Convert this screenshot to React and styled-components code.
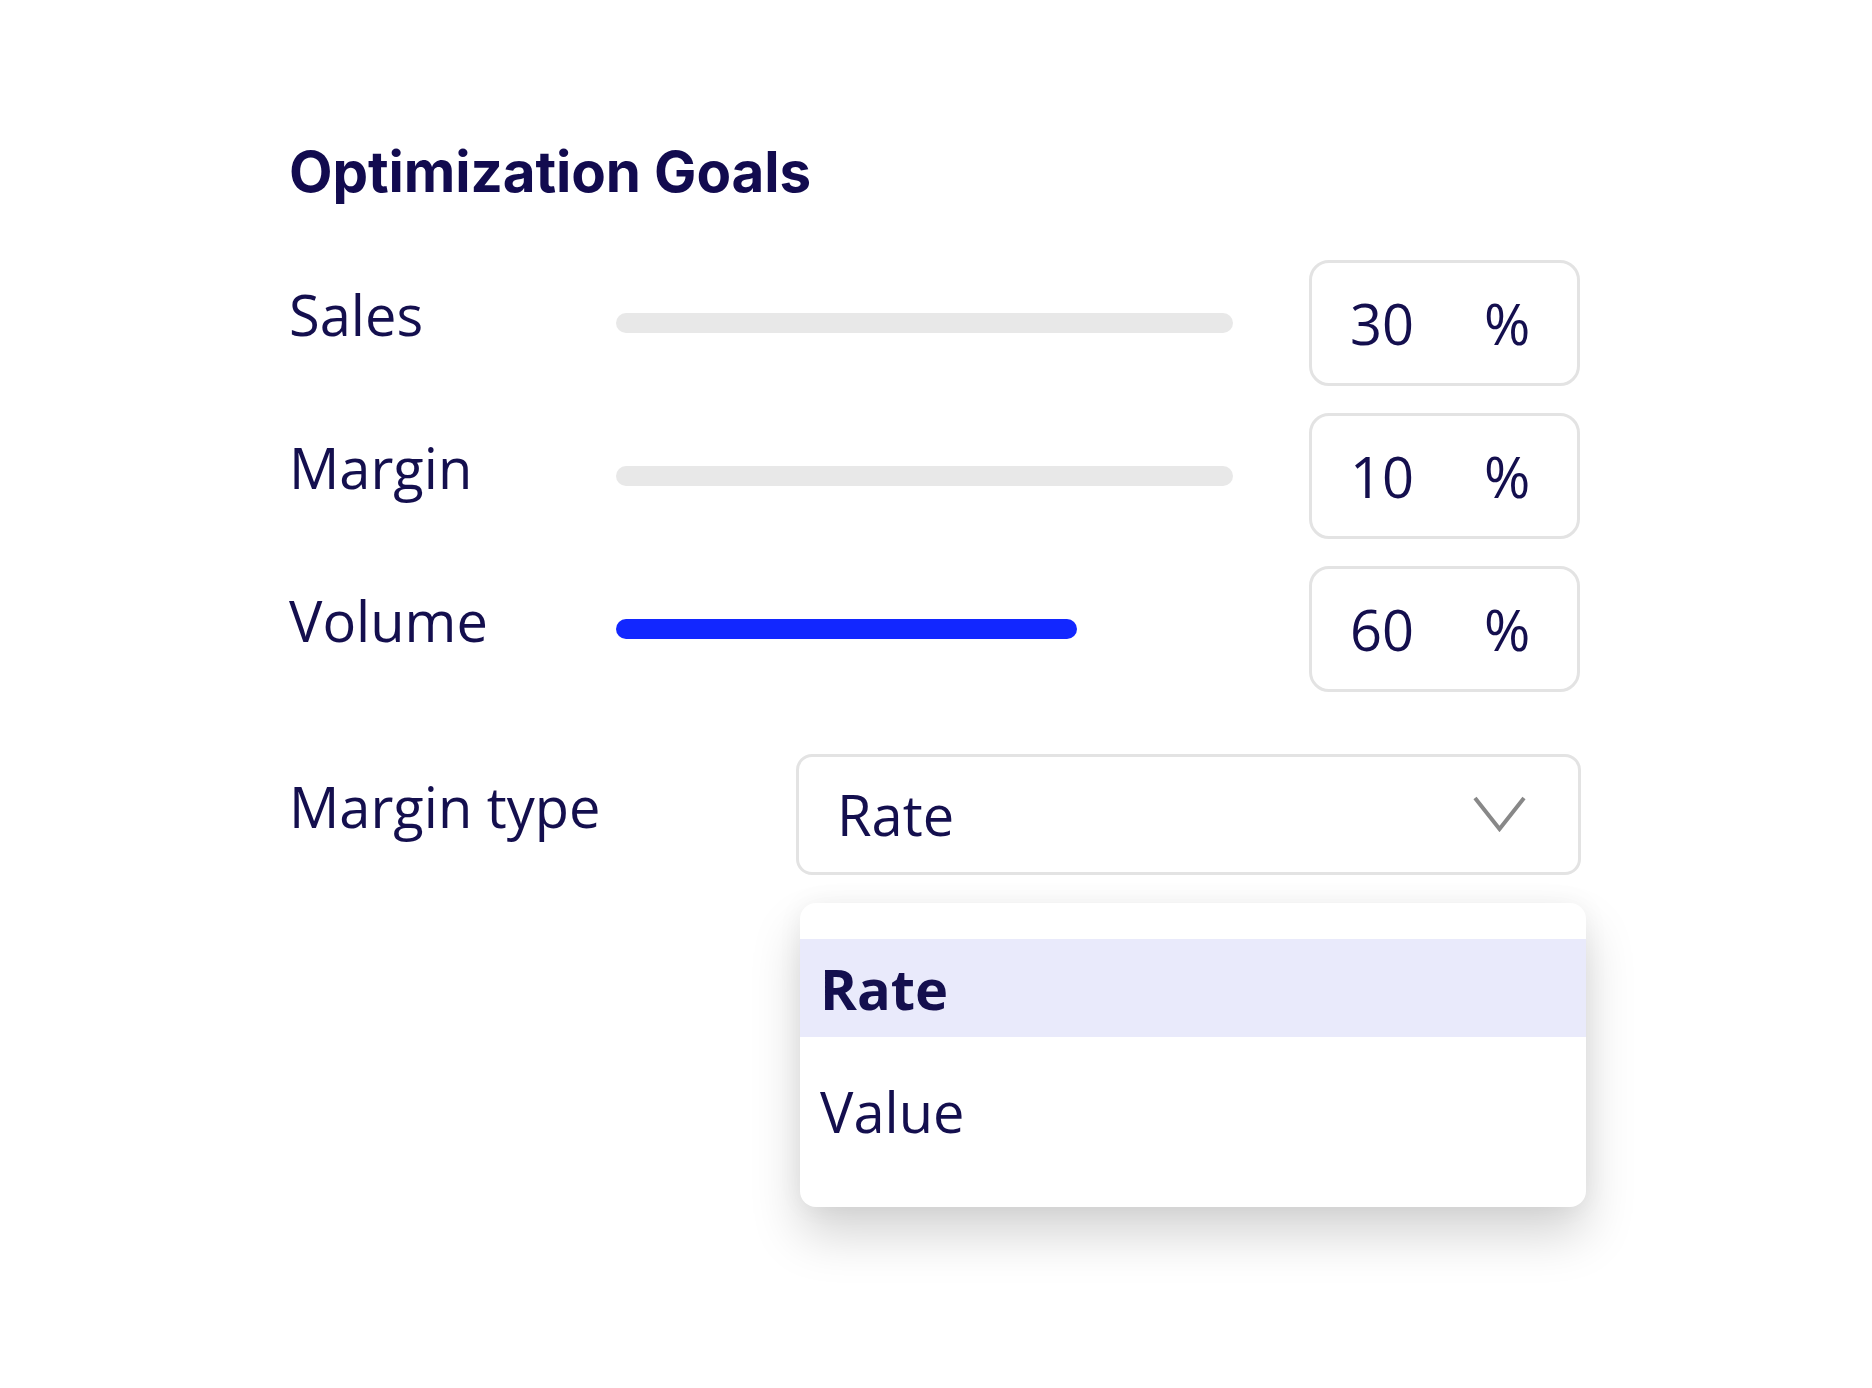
import React from 'react';
import styled, { createGlobalStyle } from 'styled-components';

const GlobalStyle = createGlobalStyle`
  body {
    margin: 0;
    background: #ffffff;
    font-family: "Open Sans", "Noto Sans", sans-serif;
    color: #140f4e;
  }
`;

const goals = [
  { label: 'Sales', value: 30, active: false },
  { label: 'Margin', value: 10, active: false },
  { label: 'Volume', value: 60, active: true },
];

const Page = styled.div`
  padding: 144px 0 0 289px;
  min-height: 1244px;
`;

const Title = styled.h1`
  margin: 0 0 59px 0;
  font-family: Inter, "Liberation Sans", sans-serif;
  font-weight: 700;
  font-size: 56.5px;
  line-height: 1;
  color: #120b4f;
  letter-spacing: -0.1px;
`;

const Rows = styled.div`
  display: flex;
  flex-direction: column;
  gap: 27px;
`;

const Row = styled.div`
  display: flex;
  align-items: center;
  height: 126px;
`;

const Label = styled.div`
  width: ${p => p.$width || 327}px;
  font-size: 56px;
  line-height: 1;
  margin-bottom: 17px;
  color: #140f4e;
`;

const Track = styled.div`
  width: 617px;
  margin-right: 76px;
  display: flex;
`;

const Bar = styled.div`
  height: 20px;
  border-radius: 10px;
  background: ${p => (p.$active ? '#1227ff' : '#e8e8e8')};
`;

const ValueBox = styled.div`
  box-sizing: border-box;
  width: 271px;
  height: 126px;
  border: 3px solid #e3e3e3;
  border-radius: 20px;
  display: flex;
  align-items: center;
  padding-left: 38px;
  font-size: 56px;
  line-height: 1;
  color: #140f4e;
`;

const Num = styled.span`
  width: 134px;
`;

const SelectRow = styled.div`
  display: flex;
  align-items: center;
  margin-top: 62px;
`;

const SelectWrap = styled.div`
  position: relative;
`;

const SelectBox = styled.div`
  box-sizing: border-box;
  width: 785px;
  height: 121px;
  border: 3px solid #e3e3e3;
  border-radius: 16px;
  display: flex;
  align-items: center;
  justify-content: space-between;
  padding: 0 52px 0 38px;
  font-size: 56px;
  line-height: 1;
  color: #140f4e;
`;

const Menu = styled.div`
  position: absolute;
  top: 149px;
  left: 4px;
  width: 786px;
  box-sizing: border-box;
  padding: 36px 0 47px;
  display: flex;
  flex-direction: column;
  gap: 25px;
  background: #ffffff;
  border-radius: 16px;
  box-shadow: 0 28px 50px rgba(0, 0, 0, 0.17), 0 0 26px rgba(0, 0, 0, 0.05);
`;

const Option = styled.div`
  height: 98px;
  display: flex;
  align-items: center;
  padding-left: 20px;
  font-size: 56px;
  line-height: 1;
  font-weight: ${p => (p.$selected ? 700 : 400)};
  background: ${p => (p.$selected ? '#e9eafb' : 'transparent')};
  color: #140f4e;
`;

const Chevron = () => (
  <svg width="53" height="36" viewBox="0 0 53 36">
    <polyline points="2,2 26.5,33 51,2" fill="none" stroke="#888888" strokeWidth="4" />
  </svg>
);

export default function App() {
  return (
    <Page>
      <GlobalStyle />
      <Title>Optimization Goals</Title>
      <Rows>
        {goals.map(g => (
          <Row key={g.label}>
            <Label>{g.label}</Label>
            <Track>
              <Bar $active={g.active} style={{ width: g.active ? 461 : 617 }} />
            </Track>
            <ValueBox>
              <Num>{g.value}</Num>
              <span>%</span>
            </ValueBox>
          </Row>
        ))}
      </Rows>
      <SelectRow>
        <Label $width={507}>Margin type</Label>
        <SelectWrap>
          <SelectBox>
            <span>Rate</span>
            <Chevron />
          </SelectBox>
          <Menu>
            <Option $selected>Rate</Option>
            <Option>Value</Option>
          </Menu>
        </SelectWrap>
      </SelectRow>
    </Page>
  );
}
